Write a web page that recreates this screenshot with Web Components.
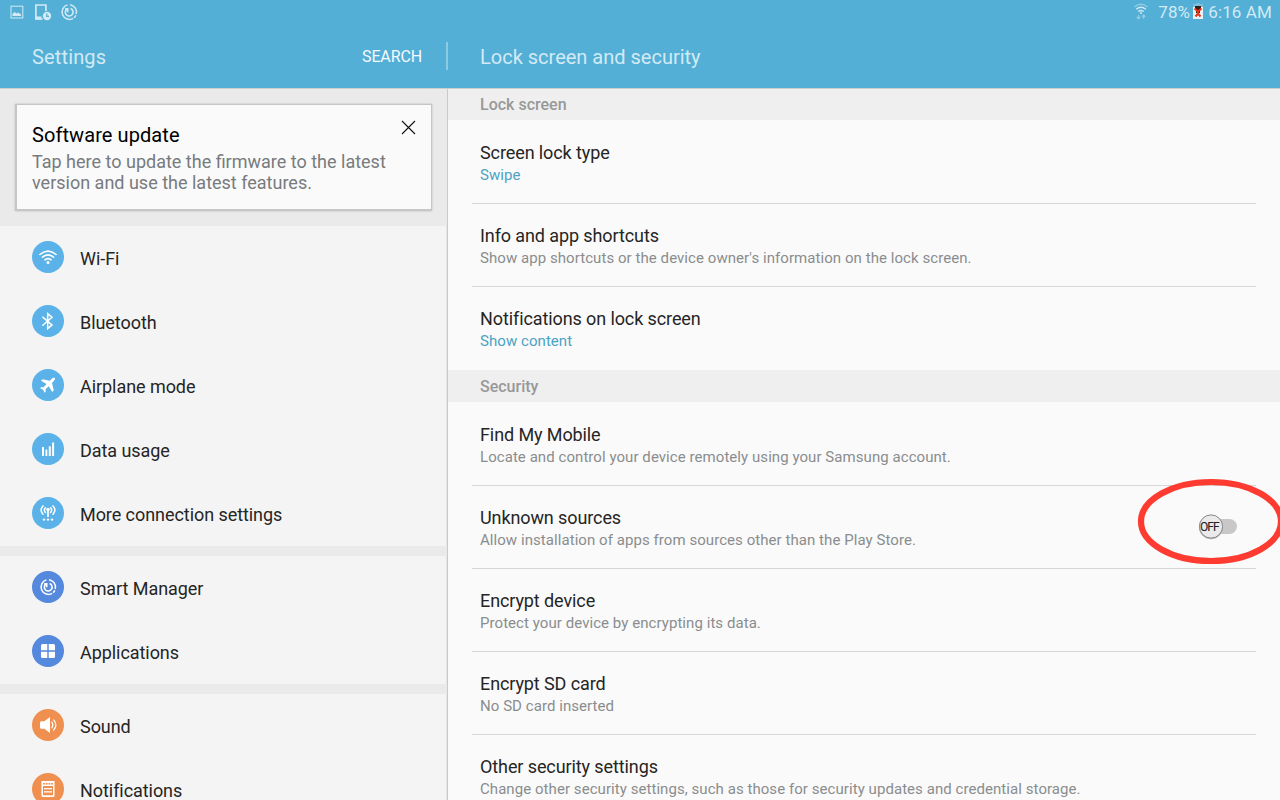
<!DOCTYPE html>
<html lang="en">
<head>
<meta charset="utf-8">
<title>Settings</title>
<style>
html,body{margin:0;height:100%;overflow:hidden}
body{font-family:Roboto,"Liberation Sans",sans-serif;color:#252525;background:#fafafa}
</style>
</head>
<body>
<settings-app></settings-app>
<script>
const define = (name, html, init) => customElements.define(name, class extends HTMLElement {
  connectedCallback() {
    if (this.shadowRoot) return;
    const root = this.attachShadow({ mode: 'open' });
    const t = document.createElement('template');
    t.innerHTML = html;
    root.append(t.content.cloneNode(true));
    if (init) init(this, root);
  }
});

const s = 'fill="none" stroke="#fff" stroke-linecap="round"';
const power = (c) => `<g fill="none" stroke="${c}"><path stroke-width="1.5" d="M14.4 8.9A7.4 7.4 0 1 0 20.2 22.4M17 8.7A7.4 7.4 0 0 1 23.2 18M22.8 19.4A7.4 7.4 0 0 1 21.2 21.7"/><path stroke-width="1.6" d="M12.2 12.9H14.7V16.2"/><path stroke-width="1.6" d="M13.9 13A3.9 3.9 0 1 0 17.6 12.5"/></g>`;
const icons = {
  wifi: `<g ${s} stroke-width="1.6" stroke-linecap="butt"><path d="M7.9 13.5Q16 6.7 24.1 13.5"/><path d="M10.5 16.2Q16 11.7 21.5 16.2"/><path d="M12.9 18.8Q16 16.4 19.1 18.8"/></g><circle cx="16" cy="21.4" r="1.5" fill="#fff"/>`,
  bluetooth: `<path ${s} stroke-width="1.5" d="M10.8 12.2 20 19.9 15.7 23.6V8.6L20 12.2 10.8 20.2"/>`,
  airplane: `<path fill="#fff" d="M22.8 9.1C23.5 9.7 22.8 11 21.8 12L20 14l1.8 7.3-1.6 1.6-3.5-5.6-3.2 3 .3 2.3-1.1 1.1-1.7-3-2.8-1.5 1.1-1.1 2.3.2 3-3.2L9 11.8l1.6-1.5 7 1.5 2-1.8c1-1 2.5-1.6 3.2-.9Z"/>`,
  data: `<path fill="#fff" d="M10 14h2V23h-2zM13.5 16.4h1.8V23h-1.8zM16.8 13.2h2V23h-2zM20.1 9.5h2V23h-2z"/>`,
  more: `<g ${s} stroke-width="1.5"><path d="M11 8.9Q7.2 13 11 17.3M13.4 10.8Q11.3 13.1 13.4 15.4M18.6 10.8Q20.7 13.1 18.6 15.4M21 8.9Q24.8 13 21 17.3"/><path stroke-width="1.7" stroke-linecap="butt" d="M16 12.8v7.2"/></g><g fill="#fff"><circle cx="16" cy="12.6" r="1.8"/><circle cx="12" cy="22.6" r="1.2"/><circle cx="16" cy="22.6" r="1.2"/><circle cx="20" cy="22.6" r="1.2"/></g>`,
  manager: power('#fff'),
  apps: `<path fill="#fff" d="M10.5 9H15.3V15.3H9V10.5Q9 9 10.5 9ZM16.7 9h4.8q1.5 0 1.5 1.5v4.8h-6.3ZM9 16.7h6.3V23h-4.8Q9 23 9 21.5ZM16.7 16.7H23v4.8q0 1.5-1.5 1.5h-4.8Z"/>`,
  sound: `<path fill="#fff" d="M9.5 12.2h2.8L18 8v16l-5.7-4.2H9.5Q8 19.8 8 18.3v-4.6q0-1.5 1.5-1.5Z"/><g ${s} stroke-width="1.2" stroke-linecap="butt"><path d="M19.9 13.1Q21.8 16 19.9 18.9M21.6 10.9Q26.2 16 21.6 21.1"/></g>`,
  note: `<path fill="#fff" d="M9.5 8H22.5V22.5Q22.5 24 21 24H11Q9.5 24 9.5 22.5Z"/><g fill="#f09050"><circle cx="12" cy="10.7" r="1"/><circle cx="14.7" cy="10.7" r="1"/><circle cx="17.4" cy="10.7" r="1"/><circle cx="20" cy="10.7" r="1"/><path d="M11 13h10v9.3H11Z"/></g><path fill="none" stroke="#fff" stroke-width="1.2" d="M12 15.6h8M12 18.8h8"/>`
};

define('status-bar', `<style>
:host{display:flex;height:24px;align-items:center;color:#d2eaf4;font-size:17px;padding:0 8px 0 9px}
svg{display:block;flex:none}.space{flex:1}.pct{margin-left:9px;letter-spacing:.15px}.time{margin-left:5px;letter-spacing:.12px}
</style>
<svg width="76" height="24" viewBox="9 0 76 24" fill="none" stroke="#d2eaf4">
<rect x="11" y="6.2" width="11.8" height="11.8" stroke-width="1"/><path fill="#d2eaf4" stroke="none" d="M12.5 16V13.7L14.8 12l1.5 1.4 1.8-1 3 2V16Z"/>
<path stroke-width="1.7" d="M45.9 11V5H35.9V19H42.5"/><path d="M35.5 16.5h6v3h-6Z" fill="#d2eaf4" stroke="none"/><circle cx="47" cy="16" r="4.2" fill="#d2eaf4" stroke="none"/><path stroke="#53afd6" stroke-width="1.2" d="M46.8 13.5V16.4H49"/>
<g transform="translate(53 -4)">${power('#d2eaf4')}</g>
</svg><span class="space"></span>
<svg width="16" height="24" viewBox="1133 0 16 24" fill="none" stroke="#d2eaf4" stroke-width="1.3">
<path opacity=".5" d="M1134.4 6.9Q1141 1.6 1147.6 6.9"/><path d="M1136.2 9.2Q1141 5.3 1145.8 9.2M1138.3 11.5Q1141 9.5 1143.7 11.5"/><circle cx="1141" cy="13.1" r="1" fill="#d2eaf4" stroke="none"/><path opacity=".5" d="M1138.5 14.7v4M1136.8 17l1.7 1.8 1.7-1.8M1143.7 19v-4M1142 16.7l1.7-1.8 1.7 1.8"/></svg>
<span class="pct">78%</span>
<svg style="margin-left:3px" width="10" height="24" viewBox="1193 0 10 24"><path fill="#7bbfdc" d="M1193 4h3V3h4v1h3v3h-10Z"/><path fill="#e8f3f5" d="M1193 7h10v12h-10Z"/><path fill="#33211b" d="M1195 6h6v4h-1v3h-4v-3h-1Z"/><path stroke="#ed3419" stroke-width="2" fill="none" d="M1194.5 8.5 1198 11.5 1201.5 8.5M1198 11V14M1195.5 16.5 1198 13.5 1200.5 16.5"/></svg>
<span class="time">6:16 AM</span>`);

define('app-header', `<style>
:host{display:grid;grid-template-columns:446px 2px 1fr;height:64px;box-sizing:border-box;padding-top:2px;align-items:center;color:#d2eaf4;font-size:20px}
.left{display:flex;justify-content:space-between;align-items:center;padding:0 24px 0 32px}
.left slot{letter-spacing:.15px}.search{color:#f4fafd;font-size:16px;letter-spacing:-.12px;margin-top:-1px}
i{width:2px;height:28px;background:#8dcae4;margin-top:-2px}.detail{padding-left:32px;letter-spacing:0}
</style><div class="left"><slot></slot><span class="search">SEARCH</span></div><i></i><slot class="detail" name="detail" style="display:block"></slot>`);

define('update-card', `<style>
:host{display:block;background:#eaeaea;height:138px;box-sizing:border-box;padding:16px 15px 0}
.card{box-sizing:border-box;position:relative;height:107px;background:#fafafa;border:1px solid #c6c6c6;border-left-width:2px;border-bottom-width:2px;box-shadow:0 0 2px #bbb;padding:18px 15px 0}
h2{margin:0;font:400 20px/24px Roboto,sans-serif;color:#000;letter-spacing:.08px}p{margin:4px 0 0;font-size:18px;line-height:21px;color:#777b7d}
svg{position:absolute;right:15px;top:15px}
</style><div class="card"><h2><slot name="title"></slot></h2><p><slot></slot></p><svg width="15" height="15"><path d="M1 1 14 14M14 1 1 14" stroke="#111" stroke-width="1.1"/></svg></div>`);

define('nav-group', `<style>:host{display:block}:host([gap]){border-top:10px solid #eaeaea}</style><slot></slot>`);
define('nav-item', `<style>
:host{display:flex;height:64px;box-sizing:border-box;padding:0 32px 2px;align-items:center;gap:16px;font-size:18px}
svg{flex:none}.label{padding-top:3px;white-space:nowrap;letter-spacing:-.06px}
</style><svg width="32" height="32"></svg><span class="label"><slot></slot></span>`, (el, root) => {
  root.querySelector('svg').innerHTML = `<circle cx="16" cy="16" r="16" fill="${el.getAttribute('color') || '#5ab2e8'}"/>` + icons[el.getAttribute('icon')];
});

define('pref-section', `<style>
:host{display:block;padding-bottom:1px}.head{height:32px;line-height:34px;background:#efefef;padding-left:32px;font-size:16px;font-weight:500;color:#989898}
::slotted(pref-row:not(:first-of-type)){--line:#d7d7d7}
</style><div class="head"></div><slot></slot>`, (el, root) => { root.querySelector('.head').textContent = el.getAttribute('heading'); });

define('pref-row', `<style>
:host{display:flex;align-items:flex-start;justify-content:space-between;box-sizing:border-box;height:83px;margin:0 24px;padding:21px 19px 0 8px;border-top:1px solid var(--line,transparent)}
.t{font-size:18px;line-height:22px;letter-spacing:-.1px}.s{font-size:15px;line-height:20px;margin-top:1px;color:#8a8d8e;letter-spacing:.06px;white-space:nowrap}:host([accent]) .s{color:#4ba3c3}
</style><div><div class="t"><slot name="title"></slot></div><div class="s"><slot></slot></div></div><slot name="control"></slot>`);

define('off-switch', `<style>
:host{display:block;position:relative;width:40px;height:28px;margin-top:5px}
svg{display:block}.mark{position:absolute;left:-60px;top:-35px}
span{position:absolute;left:3px;top:9px;font-size:12px;line-height:12px;color:#222;letter-spacing:-.9px;-webkit-text-stroke:.1px}
</style><svg width="40" height="28"><rect x="12" y="7" width="28" height="15" rx="7.5" fill="#c8c8c8"/><circle cx="14" cy="15.3" r="12" fill="#bbb"/><circle cx="14" cy="14.5" r="11.6" fill="#eaeaea" stroke="#858585" stroke-width="1"/></svg><span>OFF</span>
<svg class="mark" width="146" height="90"><ellipse cx="74" cy="44.5" rx="70" ry="39.5" fill="none" stroke="#fe3b30" stroke-width="6.2"/></svg>`);

define('settings-app', `<style>
:host{display:flex;flex-direction:column;width:1280px;height:800px;overflow:hidden}
header{background:#53afd6;flex:none}
main{display:grid;grid-template-columns:447px 833px;flex:1;min-height:0}
nav{background:#f4f4f4;overflow:hidden;box-shadow:inset -1px 0 #e5e5e5}section{background:#fafafa;overflow:hidden;border-left:1px solid #c9c9c9}
main>*{border-top:1px solid #c9ced0;box-sizing:border-box}
update-card,.first{margin-top:-1px}
</style>
<header><status-bar></status-bar><app-header>Settings<span slot="detail">Lock screen and security</span></app-header></header>
<main><nav>
<update-card><span slot="title">Software update</span>Tap here to update the firmware to the latest<br>version and use the latest features.</update-card>
<nav-group><nav-item icon="wifi">Wi-Fi</nav-item><nav-item icon="bluetooth">Bluetooth</nav-item><nav-item icon="airplane">Airplane mode</nav-item><nav-item icon="data">Data usage</nav-item><nav-item icon="more">More connection settings</nav-item></nav-group>
<nav-group gap><nav-item icon="manager" color="#5589dd">Smart Manager</nav-item><nav-item icon="apps" color="#5589dd">Applications</nav-item></nav-group>
<nav-group gap><nav-item icon="sound" color="#f09050">Sound</nav-item><nav-item icon="note" color="#f09050">Notifications</nav-item></nav-group>
</nav><section>
<pref-section class="first" heading="Lock screen">
<pref-row accent><span slot="title">Screen lock type</span>Swipe</pref-row>
<pref-row><span slot="title">Info and app shortcuts</span>Show app shortcuts or the device owner's information on the lock screen.</pref-row>
<pref-row accent><span slot="title">Notifications on lock screen</span>Show content</pref-row></pref-section>
<pref-section heading="Security">
<pref-row><span slot="title">Find My Mobile</span>Locate and control your device remotely using your Samsung account.</pref-row>
<pref-row><span slot="title">Unknown sources</span>Allow installation of apps from sources other than the Play Store.<off-switch slot="control"></off-switch></pref-row>
<pref-row><span slot="title">Encrypt device</span>Protect your device by encrypting its data.</pref-row>
<pref-row><span slot="title">Encrypt SD card</span>No SD card inserted</pref-row>
<pref-row><span slot="title">Other security settings</span>Change other security settings, such as those for security updates and credential storage.</pref-row></pref-section>
</section></main>`);
</script>
</body>
</html>
